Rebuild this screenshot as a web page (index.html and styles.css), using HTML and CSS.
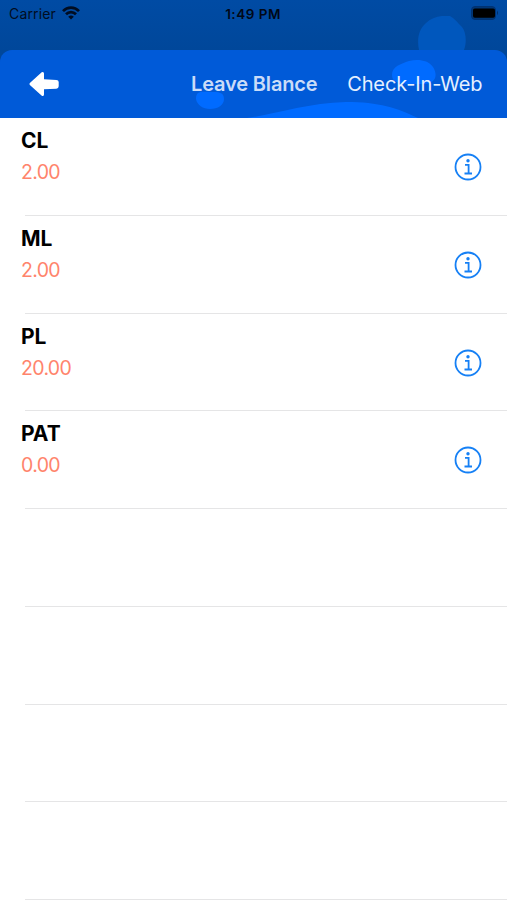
FILE: index.html
```html
<!DOCTYPE html>
<html lang="en">
<head>
<meta charset="utf-8">
<title>Leave Blance</title>
<link rel="stylesheet" href="styles.css">
</head>
<body>
<div class="screen">
  <div class="status">
    <svg class="blob" width="48" height="34" viewBox="0 0 48 34"><path d="M1 34C-1 24 0 14 8 7C14 1 24-1 32 0C36 2 40 7 44 11C48 16 49 26 46 34Z" fill="#0057bd"/></svg>
    <div class="carrier"><span>Carrier</span>
      <svg width="18" height="14" viewBox="0 0 18 14" fill="none" stroke="#000d22" stroke-width="2.7"><path d="M1 5.1C5.5.4 12.5.4 17 5.1M4 8.3C6.8 5.4 11.2 5.4 14 8.3"/><path d="M9 13.5L6.2 10.7Q9 8.5 11.8 10.7Z" fill="#000d22" stroke="none"/></svg>
    </div>
    <span class="time">1:49 PM</span>
    <svg class="battery" width="28" height="14" viewBox="0 0 28 14"><rect x=".5" y=".5" width="24" height="13" rx="3.5" fill="#003675" stroke="#003272"/><rect x="2" y="2.5" width="22" height="9.3" rx="1.8" fill="#000"/><path d="M26 4.5Q28 6.9 26 9.3Z" fill="#002d68"/></svg>
  </div>
  <header class="nav">
    <svg class="waves" width="507" height="68" viewBox="0 0 507 68" fill="#006bff"><path d="M196 49C196 40 202 42 210 42C219 42 224 42 224 49C224 55 218 59 210 59C203 59 197 55 196 49Z"/><path d="M392 25C392 16 401 14 409 11C418 9 428 10 433 17C438 25 436 33 425 34L407 34C398 33 392 32 392 25Z"/><path d="M247 68C276 64 307 53 346 52C379 52 397 58 418 68Z"/></svg>
    <svg class="back" width="32" height="26" viewBox="0 0 32 26"><path d="M1.4 11.4L12.7 1.3Q14.8.1 15 2.5V8.2L27.4 9.1Q29.6 9.3 29.7 11V15.2Q29.6 17.5 27.3 17.7L15 18.2V23.4Q14.7 25.7 12.8 24.7L1.4 14.5Q-.5 12.9 1.4 11.4Z" fill="#fff"/></svg>
    <h1>Leave Blance</h1>
    <span class="action">Check-In-Web</span>
  </header>
  <main class="list">
    <section class="row"><div><h2>CL</h2><p>2.00</p></div><svg class="info" viewBox="0 0 28 28"><use href="#info"/></svg></section>
    <section class="row"><div><h2>ML</h2><p>2.00</p></div><svg class="info" viewBox="0 0 28 28"><use href="#info"/></svg></section>
    <section class="row"><div><h2>PL</h2><p>20.00</p></div><svg class="info" viewBox="0 0 28 28"><use href="#info"/></svg></section>
    <section class="row"><div><h2>PAT</h2><p>0.00</p></div><svg class="info" viewBox="0 0 28 28"><use href="#info"/></svg></section>
    <section class="row"></section>
    <section class="row"></section>
    <section class="row"></section>
    <section class="row"></section>
  </main>
</div>
<svg class="defs" width="0" height="0"><defs><g id="info" fill="none" stroke="#1680f5" stroke-width="1.8"><circle cx="14" cy="14" r="12.5"/><path d="M11 11.8H14.6V20.5M10.5 20.5H18"/><circle cx="14" cy="7.8" r="1.7" fill="#1680f5" stroke="none"/></g></defs></svg>
</body>
</html>
```
FILE: styles.css
```css
* { box-sizing: border-box; margin: 0; padding: 0; }
body { width: 507px; height: 900px; overflow: hidden; background: #fff; font-family: Inter, "Liberation Sans", sans-serif; }
.defs { position: absolute; }
svg { display: block; flex: none; }
.screen { height: 900px; overflow: hidden; background: linear-gradient(#004ba4, #00479a 50px, #00479a 90px, #fff 90px); }
.status { position: relative; height: 50px; display: grid; grid-template-columns: 1fr auto 1fr; align-items: start; padding: 6px 8px 0 9px; color: #000d22; }
.blob { position: absolute; left: 418px; top: 16px; }
.carrier { display: flex; gap: 6px; font-size: 14px; line-height: 16px; letter-spacing: .15px; }
.time { position: relative; margin-right: 2px; font-size: 13.5px; line-height: 16px; font-weight: 600; letter-spacing: .8px; letter-spacing: .5px; color: #000817; }
.battery { position: relative; justify-self: end; }
.nav { position: relative; height: 68px; display: flex; align-items: center; padding: 0 24.5px 0 29px; background: #005ad8; border-radius: 12px 12px 0 0; overflow: hidden; }
.waves { position: absolute; left: 0; top: 0; }
.back, .nav h1, .action { position: relative; }
.nav h1 { margin-left: 130px; font-size: 20px; line-height: 26px; font-weight: 600; letter-spacing: -.15px; color: #cadcf8; white-space: nowrap; }
.action { margin-left: auto; font-size: 20px; line-height: 26px; letter-spacing: -.12px; color: #e5f0ff; white-space: nowrap; }
.list { padding-top: .4px; }
.row { height: 97.7px; display: flex; justify-content: space-between; padding: 9px 25px 0 21px; background: linear-gradient(#e5e5e6, #e5e5e6) 25px 100% / 100% 1px no-repeat; }
.row h2 { font-size: 21px; line-height: 28px; font-weight: 700; letter-spacing: 0; color: #000; }
.row p { margin-top: 3px; font-size: 19.5px; line-height: 28px; letter-spacing: -.65px; color: #ff846c; }
.info { width: 28px; height: 28px; margin-top: 26px; }
```
